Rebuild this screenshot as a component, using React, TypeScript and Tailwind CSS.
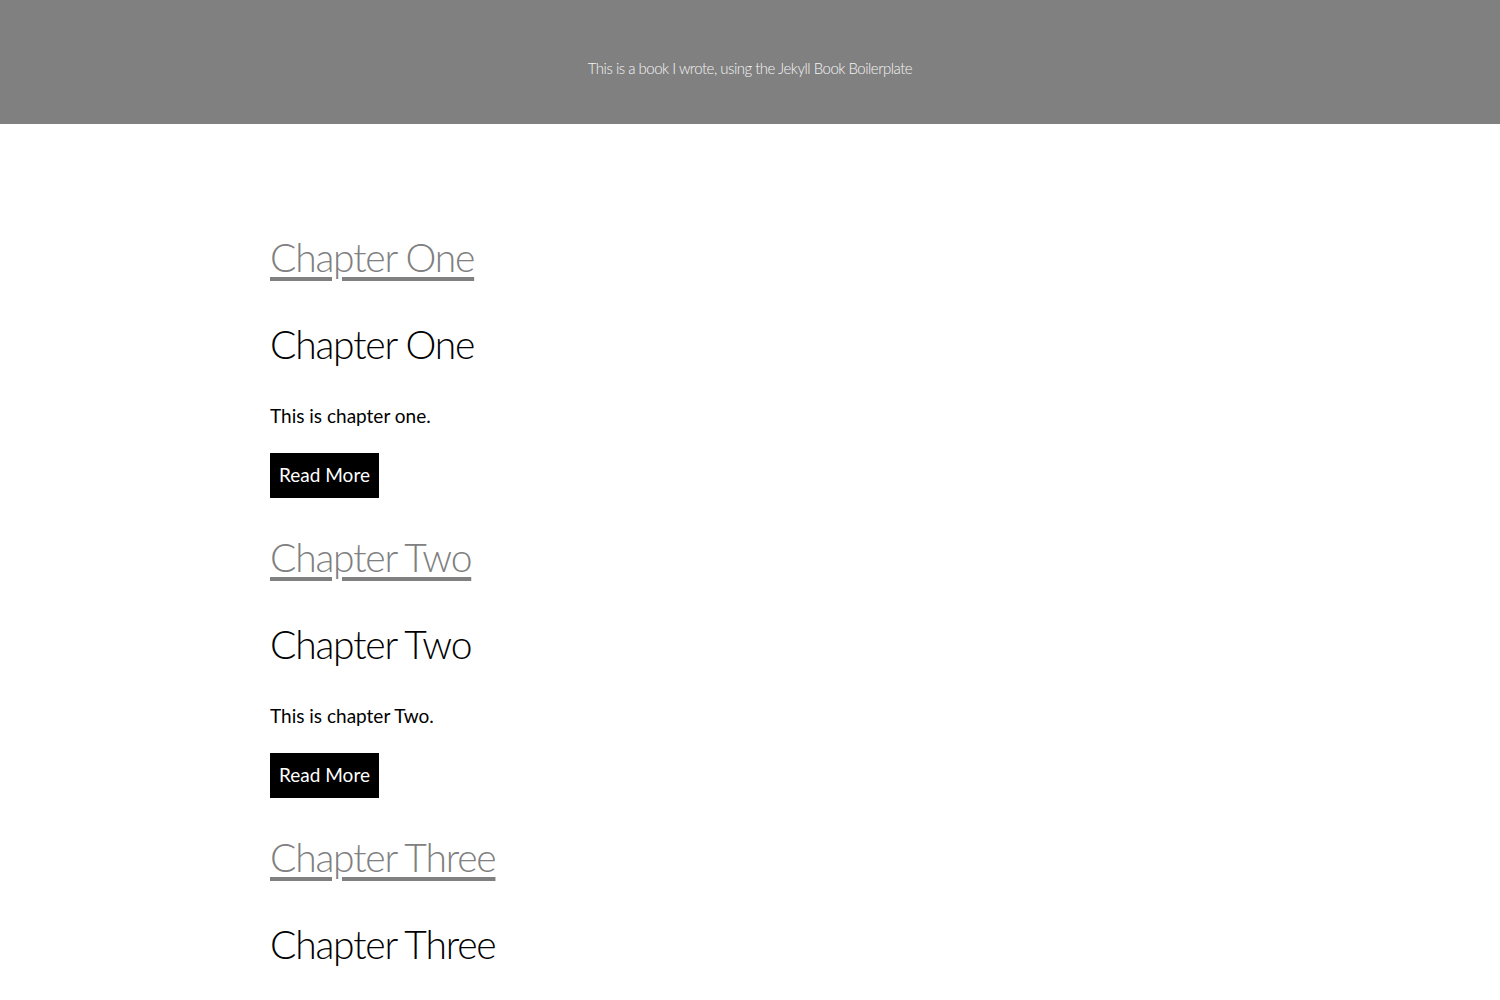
const chapters = [
  { title: 'Chapter One', excerpt: 'This is chapter one.' },
  { title: 'Chapter Two', excerpt: 'This is chapter Two.' },
  { title: 'Chapter Three', excerpt: 'This is chapter Three.' },
];

const font = { fontFamily: '"Lato", "Open Sans", sans-serif' };

export default function App() {
  return (
    <div className="min-h-screen bg-white" style={font}>
      {/* Site header */}
      <header className="flex h-[124px] items-center justify-center bg-[#808080]">
        <p className="pt-[12px] text-[15px] font-light tracking-[-0.5px] text-[#f4f4f4]">
          This is a book I wrote, using the Jekyll Book Boilerplate
        </p>
      </header>

      {/* Chapter list */}
      <main className="mx-auto w-[960px] pt-[109px]">
        {chapters.map((c) => (
          <article key={c.title} className="h-[300px]">
            <a
              href="#"
              className="block text-[39px] font-light leading-[48px] tracking-[-1.2px] text-[#808080] underline decoration-[4px] underline-offset-[5px]"
            >
              {c.title}
            </a>
            <h2 className="mt-[39px] text-[39px] font-light leading-[48px] tracking-[-1.2px] text-black">
              {c.title}
            </h2>
            <p className="mt-[36px] text-[19px] leading-[24px] text-black">{c.excerpt}</p>
            <button
              type="button"
              className="mt-[25px] h-[45px] bg-black px-[9px] text-[19px] text-white"
            >
              Read More
            </button>
          </article>
        ))}
      </main>
    </div>
  );
}
